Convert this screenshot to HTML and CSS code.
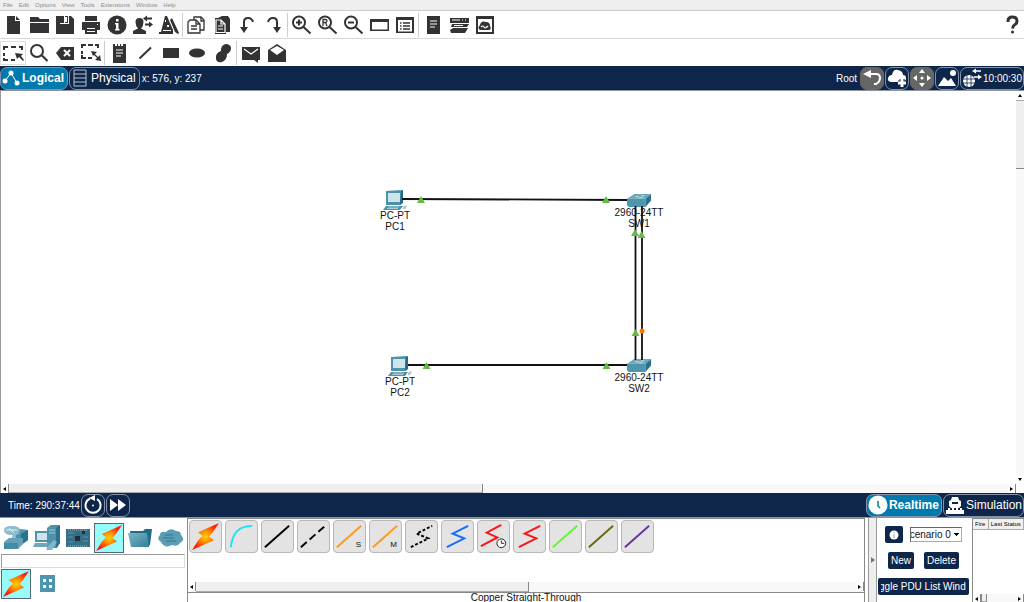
FILE: index.html
```html
<!DOCTYPE html>
<html lang="en">
<head>
<meta charset="utf-8">
<title>Network topology</title>
<link rel="stylesheet" href="styles.css">
</head>
<body>
<svg class="defs" aria-hidden="true">
  <defs>
    <radialGradient id="fire"><stop offset="0" stop-color="#ffd400"/><stop offset=".35" stop-color="#ff9a00"/><stop offset="1" stop-color="#ff1a0a"/></radialGradient>
    <linearGradient id="teal" x1="0" y1="0" x2="1" y2="1"><stop offset="0" stop-color="#7fb5c6"/><stop offset="1" stop-color="#2f7f98"/></linearGradient>
    <symbol id="bolt" viewBox="0 0 28 28"><path d="M27 1 7 10l4 3.500-4 4L1 27l21-9.500-4.500-3.500 3.500-4z" fill="url(#fire)"/></symbol>
    <symbol id="pc" viewBox="0 0 24 20"><path d="M3 1 19 0v13l-2 2H3z" fill="#4b93ab"/><path d="M18 1 20 0v13l-3 2z" fill="#226c86"/><path d="M5 3h12v9H5z" fill="#cfe3ea"/><path d="M3 16h17l-3 4H0z" fill="#4b93ab"/><path d="M5 17h11M4 18.500h11" stroke="#a9cbd7"/><path d="M20 17q3-3 4-1l-2 3q-3 1-2-2z" fill="#a9c8d3"/></symbol>
    <symbol id="switch" viewBox="0 0 26 14"><path d="M0 5 8 0h18l-6 5z" fill="#6ba8bc"/><path d="M0 5h20v9H2L0 12z" fill="#4e96ae"/><path d="M20 5 26 0v7l-6 7z" fill="#2a728c"/><path d="M9 3h4M15 2h4M13 4h4" stroke="#cfe3ea"/></symbol>
  </defs>
</svg>

<nav class="menubar" aria-label="Main menu">
  <a href="#">File</a><a href="#">Edit</a><a href="#">Options</a><a href="#">View</a><a href="#">Tools</a><a href="#">Extensions</a><a href="#">Window</a><a href="#">Help</a>
</nav>

<div class="toolbar main-tools" role="toolbar" aria-label="Main">
  <button class="tool" aria-label="New"><svg viewBox="0 0 24 24"><path d="M6 3h8v5h5v13H6z"/><path d="m15 3 4 4h-4z"/></svg></button>
  <button class="tool" aria-label="Open"><svg viewBox="0 0 24 24"><path d="M3 4h8l2 2h9v3H3zM3 10h19v10H3z"/></svg></button>
  <button class="tool" aria-label="Save"><svg viewBox="0 0 24 24"><path d="M3 3h4v8h9V3h2l3 3v15H3z"/><path d="M12 3h3v7h-3zM7 3h4v7H7z"/><path class="hole" d="M12 4h2v5h-2z"/></svg></button>
  <button class="tool" aria-label="Print"><svg viewBox="0 0 24 24"><path d="M6 3h12v5H6zM3 9h18v8h-3v4H6v-4H3z"/><path class="hole" d="M8 15h8v1H8zM8 18h8v1H8zM18 11h1v1h-1z"/></svg></button>
  <button class="tool" aria-label="Network information"><svg viewBox="0 0 24 24"><circle cx="12" cy="12" r="9.500"/><path class="hole" d="M11 6h2.500v2.500H11zM10 10h3.500v6h1v1.500H10V16h1v-4.500h-1z"/></svg></button>
  <button class="tool" aria-label="User profile"><svg viewBox="0 0 24 24"><path d="M4.500 9q0-4 4-4t4 4-2.500 6.500l5 2.500v3H2v-3l5-2.500Q4.500 13 4.500 9z"/><path class="line" d="M15 5.500h6M14 11.500h6"/><path d="m12 5.500 4-3v6zM22 11.500l-4-3v6z"/></svg></button>
  <button class="tool" aria-label="Wizard"><svg viewBox="0 0 24 24"><path d="M8 3h2l6 14v4H2v-2h2z"/><path d="m13 7 2-2 7 15-1 1-3-2z"/><path class="hole" d="M8 7h1v2H8zM10 12h2v2h-2zM6 17h8v1H6z"/></svg></button>
  <span class="sep"></span>
  <button class="tool" aria-label="Copy"><svg viewBox="0 0 24 24"><g class="outline"><path d="M10 7V4h7l3 3v10h-5"/><path d="M6 7h6l4 4v9H4V9z" fill="#fff"/><path d="M12 7v4h4M7 13h6M7 16h6M17 4v4h3"/></g></svg></button>
  <button class="tool" aria-label="Paste"><svg viewBox="0 0 24 24"><path d="M8 5 12 3h6l2 3v13h-4v2H5V5z"/><path class="holeline" d="M6 7h5l4 4v8.500H6zM11 7v4h4M8 13h5M8 16h5"/></svg></button>
  <button class="tool" aria-label="Undo"><svg viewBox="0 0 24 24"><path class="line" d="M8 16V9q0-4 4-4t5 4"/><path d="M4 14h8l-4 6z"/></svg></button>
  <button class="tool" aria-label="Redo"><svg viewBox="0 0 24 24"><path class="line" d="M6 9q1-4 5-4t4 4v7"/><path d="M11 14h8l-4 6z"/></svg></button>
  <span class="sep"></span>
  <button class="tool" aria-label="Zoom in"><svg viewBox="0 0 24 24"><circle class="line" cx="10" cy="9.500" r="6"/><path class="line" d="m14.500 14 7 6.500M7 9.500h6M10 6.500v6"/></svg></button>
  <button class="tool" aria-label="Zoom reset"><svg viewBox="0 0 24 24"><circle class="line" cx="10" cy="9.500" r="6"/><path class="line" d="m14.500 14 7 6.500"/><path class="outline" d="M8 13V6.500h2.500q1.500 0 1.500 1.500t-1.500 1.500H8m2.500 0L12 13"/></svg></button>
  <button class="tool" aria-label="Zoom out"><svg viewBox="0 0 24 24"><circle class="line" cx="10" cy="9.500" r="6"/><path class="line" d="m14.500 14 7 6.500M7 9.500h6"/></svg></button>
  <button class="tool" aria-label="Draw palette"><svg viewBox="0 0 24 24"><path d="M3 6h19v12H3zM5 9v7.500h15.500V9z" fill-rule="evenodd"/></svg></button>
  <button class="tool" aria-label="Device dialog"><svg viewBox="0 0 24 24"><path d="M3 4h18v16H3zM5 7v11.500h14V7z" fill-rule="evenodd"/><path class="outline" d="M7 10h1.500M10 10h7M7 13h1.500M10 13h7M7 16h1.500M10 16h7" stroke-width="2"/></svg></button>
  <span class="sep"></span>
  <button class="tool" aria-label="Notes"><svg viewBox="0 0 24 24"><path d="M7 3h13v18H7z"/><path class="holeline" d="M10 8h7M10 11h7M10 14h5"/></svg></button>
  <button class="tool" aria-label="Cluster"><svg viewBox="0 0 24 24"><path d="M4 5h19v5H4zM6 11h17l-2 3H5zM7 15h15l-3 5H5l-1-3z"/><path class="holeline" d="M6 7h8M16 7h1M19 7h1M8 12.500h9"/></svg></button>
  <button class="tool" aria-label="Cloud view"><svg viewBox="0 0 24 24"><path d="M4 3h18v18H4zM6 6v13h14V6z" fill-rule="evenodd"/><path d="M8 17q-3-2 0-5 1-5 6-3 4 0 4 4 2 3-1 4z"/><path class="holeline" d="M9 14q2-2 3 0t4-1"/></svg></button>
  <button class="tool help" aria-label="Help"><svg viewBox="0 0 24 24"><path d="M9 9V8q0-4 4.500-4T18 8q0 2.500-2 3.500t-2.500 4" fill="none" stroke="#333335" stroke-width="3"/><circle cx="13.500" cy="19" r="1.500"/></svg></button>
</div>

<div class="toolbar" role="toolbar" aria-label="Common tools">
  <button class="tool selected" aria-label="Select"><svg viewBox="0 0 24 24"><path class="line" d="M3 8V5h4M10 5h5M18 5h3v3M3 11v3M3 16v2h4M10 18h4"/><path d="m14 11 8 1-2 2 3 4-1 1-4-4-2 2z"/></svg></button>
  <button class="tool" aria-label="Inspect"><svg viewBox="0 0 24 24"><circle class="line" cx="10" cy="10" r="6"/><path d="m14 15 2-1 5 5-1 2z"/></svg></button>
  <button class="tool" aria-label="Delete object"><svg viewBox="0 0 24 24"><path d="m3 12 5-6h13v13H8z"/><path d="m11 9 6 6m0-6-6 6" stroke="#fff" stroke-width="2"/></svg></button>
  <button class="tool" aria-label="Resize"><svg viewBox="0 0 24 24"><path class="line" d="M3 7V4h4M9 4h5M16 4h3v3M3 10v3M3 14v3h4M9 17h4"/><path class="outline" d="m14 12 5 5"/><path d="m12 10 6 1-4 4zM22 20l-6-1 5-5z"/></svg></button>
  <span class="sep"></span>
  <button class="tool" aria-label="Place note"><svg viewBox="0 0 24 24"><path d="M6 3h2v2h2V3h1v2h2V3h1v2h2V3h3v19H6z"/><path class="holeline" d="M9 9h7M9 12h7M9 15h5"/></svg></button>
  <button class="tool" aria-label="Draw line"><svg viewBox="0 0 24 24"><path class="line" d="M6.500 17.500 18 6.500"/></svg></button>
  <button class="tool" aria-label="Draw rectangle"><svg viewBox="0 0 24 24"><path d="M4 7h16v10H4z"/></svg></button>
  <button class="tool" aria-label="Draw ellipse"><svg viewBox="0 0 24 24"><ellipse cx="12" cy="12" rx="8" ry="4.500"/></svg></button>
  <button class="tool" aria-label="Draw freeform"><svg viewBox="0 0 24 24"><path d="M10 8q1-5 6-5 4 1 4 4 0 4-4 6 0 6-5 8-5 1-6-3-1-6 5-8z"/></svg></button>
  <span class="sep"></span>
  <button class="tool" aria-label="Add simple PDU"><svg viewBox="0 0 24 24"><path d="M3 6h18v13h-2v3l-4-3H3z"/><path class="holeline" d="m5 8 7 5 7-5"/></svg></button>
  <button class="tool" aria-label="Add complex PDU"><svg viewBox="0 0 24 24"><path d="m3 9 9-6 9 6v12H3z"/><path class="hole" d="m5 9 7-4 7 4-7 5z"/></svg></button>
</div>

<header class="bar">
  <button class="pill strong active"><svg class="i18" viewBox="0 0 18 18"><path d="m3 12 6-8 6 10" fill="none" stroke="#fff"/><circle cx="9" cy="4" r="2.500"/><circle cx="3" cy="12" r="2.500"/><circle cx="15" cy="14" r="2.500"/></svg>Logical</button>
  <button class="pill strong2"><svg class="i18" viewBox="0 0 18 18"><path d="M3 1h12v16H3zM3 5h12M3 9h12M3 13h12" fill="none" stroke="#b9c3d2"/></svg>Physical</button>
  <span class="coords">x: 576, y: 237</span>
  <span class="root">Root</span>
  <button class="pill square grey" aria-label="Back"><svg class="i20" viewBox="0 0 20 20"><path d="M5 6h9q4 0 4 4t-4 6h-2" fill="none" stroke="#fff" stroke-width="2"/><path d="m1 6 8-4v8z"/></svg></button>
  <button class="pill square" aria-label="New cluster"><svg class="i20" viewBox="0 0 20 20"><path d="M4 14q-4-1-3-4t4-3q1-6 6-5t5 5q3 0 3 3t-3 4z"/><path d="M15 11v9M11 15h8" stroke="#0e2649" stroke-width="5"/><path d="M15 11v8M11 15h8" stroke="#fff" stroke-width="3"/></svg></button>
  <button class="pill square grey" aria-label="Move object"><svg class="i20" viewBox="0 0 20 20"><path d="m10 1 3 4H7zM10 19l3-4H7zM1 10l4-3v6zM19 10l-4-3v6z"/><circle cx="10" cy="10" r="1.500"/></svg></button>
  <button class="pill square" aria-label="Background"><svg class="i20" viewBox="0 0 20 20"><path d="m1 18 6-9 4 4 3-3 5 8z"/><circle cx="16" cy="5" r="3"/></svg></button>
  <button class="pill clock"><svg class="i20" viewBox="0 0 20 20"><circle cx="7" cy="13" r="6"/><path d="M1 11h12M1 15h12M5 7v12M9 7v12" fill="none" stroke="#0e2649" stroke-width=".8"/><path d="M13 3h6M12 9h6" stroke="#fff" stroke-width="1.500"/><path d="m10 3 4-2.500v5zM20 9l-4-2.500v5z"/></svg>10:00:30</button>
</header>

<main class="workspace">
  <div class="canvas">
    <figure class="device pc1"><svg class="pcicon"><use href="#pc"/></svg><figcaption>PC-PT<br>PC1</figcaption></figure>
    <figure class="device pc2"><svg class="pcicon"><use href="#pc"/></svg><figcaption>PC-PT<br>PC2</figcaption></figure>
    <figure class="device sw1"><svg class="swicon"><use href="#switch"/></svg><figcaption>2960-24TT<br>SW1</figcaption></figure>
    <figure class="device sw2"><svg class="swicon"><use href="#switch"/></svg><figcaption>2960-24TT<br>SW2</figcaption></figure>
    <svg class="links">
      <path d="M402 108 627 109M408 274H627M635.500 115V269M642 115V269" stroke="#111" stroke-width="1.800"/>
      <g fill="#63bd45"><path d="m421 105 4 7h-8zM606 105l4 7h-8zM635 138l4 7h-8zM641.500 140l4 7h-8zM635.500 238l4 7h-8zM426.500 271l4 7h-8zM606.500 271l4 7h-8z"/></g>
      <circle cx="642" cy="240" r="2.500" fill="#ff7500"/>
    </svg>
  </div>
  <div class="vscroll"><span class="arrow up"></span><span class="vthumb"></span><span class="arrow down"></span></div>
  <div class="hscroll"><span class="arrow left"></span><span class="hthumb"></span><span class="arrow right"></span></div>
</main>

<section class="bar timebar">
  <span class="time">Time: 290:37:44</span>
  <button class="pill square" aria-label="Power cycle devices"><svg class="i20" viewBox="0 0 20 20"><path d="M7 3.500a7.500 7.500 0 1 0 7 .500" fill="none" stroke="#fff" stroke-width="2"/><path d="m6 3 6-3v6z"/><circle cx="10" cy="10.500" r="1"/></svg></button>
  <button class="pill square" aria-label="Fast forward"><svg class="i20" viewBox="0 0 20 20"><path d="m2 4 8 6-8 6zM10 4l8 6-8 6z"/></svg></button>
  <button class="pill strong active realtime"><svg class="i20" viewBox="0 0 20 20"><circle cx="10" cy="10" r="9.500"/><path d="M10 6v5l2 2" fill="none" stroke="#0079ad" stroke-width="1.500"/></svg>Realtime</button>
  <button class="pill strong2 simulation"><svg class="i20" viewBox="0 0 20 20"><path d="M4 11V6l2-1 1-3h6l1 3 2 1v5l-2 2H6z"/><path d="M7 8h6" stroke="#0e2649" stroke-width="2"/><path d="M1 15h2v-2h2v2h2v-2h2v2h2v-2h2v2h2v-2h2v2h2v4H1z"/></svg>Simulation</button>
</section>

<footer class="bottom">
  <div class="picker">
    <div class="cats">
      <button class="cat" aria-label="Network devices"><svg viewBox="0 0 28 28"><path d="m13 9 5-4 8 1v10l-7 5h-5z" fill="#4d93ab"/><path d="m19 10 7-4v10l-7 5z" fill="#2a728c"/><path d="M2 6q0-4 8-4t8 4-4 5l-2 4H8q4-3 2-4-8 0-8-5z" fill="#8cbccb"/><path d="M4 6h11M7 4l5 5" stroke="#e4f0f3"/><path d="m2 18 5-4h14v6l-5 5H2z" fill="#62a1b6"/><path d="M2 19h14v6H2z" fill="#438ca6"/></svg></button>
      <button class="cat" aria-label="End devices"><svg viewBox="0 0 28 28"><path d="m14 4 4-3h9v18l-3 5H14z" fill="#4d93ab"/><path d="m23 4 4-3v18l-4 5z" fill="#2a728c"/><path d="M16 6h6M16 9h6" stroke="#a8cbd6"/><path d="M2 7h14v11H2z" fill="#4d93ab"/><path d="M4 9h10v7H4z" fill="#cfe3ea"/><path d="M2 19h14l-2 4H0z" fill="#6aa7bb"/><path d="m15 22 6-6 3 2-5 8h-6z" fill="#83b7c7"/></svg></button>
      <button class="cat" aria-label="Components"><svg viewBox="0 0 28 28"><path d="M2 5h24v18H2z" fill="#346f86"/><path d="M4 6h20M4 22h20" stroke="#9ac0cb" stroke-dasharray="1 1"/><path d="M11 12h5v5h-5zM18 7h3v3h-3z" fill="#1c2f3b"/><path d="M4 9h6M4 13h5M19 13h5M18 17h6M4 18h5" stroke="#5b94a8"/></svg></button>
      <button class="cat on" aria-label="Connections"><svg><use href="#bolt"/></svg></button>
      <button class="cat" aria-label="Miscellaneous"><svg viewBox="0 0 28 28"><path d="M4 7h13l2-2h7l-2 16-4 2H6z" fill="#1f6c86"/><path d="M2 9h19l2 14H5z" fill="url(#teal)"/></svg></button>
      <button class="cat" aria-label="Multiuser connection"><svg viewBox="0 0 28 28"><path d="M4 18q-5-3-1-7 0-4 6-3 4-5 10-1 5 0 5 4 5 5-1 8-2 4-8 2-7 4-11-3z" fill="#5a9db4"/><path d="M8 11h8M6 14h11M9 17h10" stroke="#2d7893"/></svg></button>
    </div>
    <input class="search" type="text" aria-label="Device search">
    <div class="cats">
      <button class="cat on" aria-label="Cables"><svg><use href="#bolt"/></svg></button>
      <button class="cat" aria-label="Structured cabling"><svg viewBox="0 0 28 28"><path d="M7 5h15v17H7z" fill="#4d94ae"/><path d="M10 9h3v3h-3zM16 9h3v3h-3zM10 15h3v3h-3zM16 15h3v3h-3z" fill="#fff"/></svg></button>
    </div>
  </div>

  <div class="cables">
    <div class="cablelist">
      <button class="cable" aria-label="Automatic"><svg viewBox="0 0 32 32"><use href="#bolt" x="1" y="1" width="30" height="30"/></svg></button>
      <button class="cable" aria-label="Console"><svg viewBox="0 0 32 32"><path d="M5 27Q7 5 27 5" stroke="#19e3f5"/></svg></button>
      <button class="cable" aria-label="Copper Straight-Through"><svg viewBox="0 0 32 32"><path d="M3 27 28 5" stroke="#000"/></svg></button>
      <button class="cable" aria-label="Copper Cross-Over"><svg viewBox="0 0 32 32"><path d="M3 27 28 5" stroke="#000" stroke-dasharray="8 4"/></svg></button>
      <button class="cable"><svg viewBox="0 0 32 32"><path d="M3 27 28 5" stroke="#ff9a1a"/></svg><span>S</span></button>
      <button class="cable"><svg viewBox="0 0 32 32"><path d="M3 27 28 5" stroke="#ff9a1a"/></svg><span>M</span></button>
      <button class="cable" aria-label="Phone"><svg viewBox="0 0 32 32"><path d="M5 27 23 18 11 13 27 5" stroke="#000" stroke-dasharray="3 2"/></svg></button>
      <button class="cable" aria-label="Coaxial"><svg viewBox="0 0 32 32"><path d="M5 27 23 18 11 13 27 5" stroke="#126cff"/></svg></button>
      <button class="cable" aria-label="Serial DCE"><svg viewBox="0 0 32 32"><path d="M3 26 20 17 9 12 24 4" stroke="#f91515"/><circle cx="24" cy="23" r="4.500" fill="#fff" stroke="#222" stroke-width="1"/><path d="M24 20v3h3" stroke="#222" stroke-width="1"/></svg></button>
      <button class="cable" aria-label="Serial DTE"><svg viewBox="0 0 32 32"><path d="M5 27 23 18 11 13 27 5" stroke="#f91515"/></svg></button>
      <button class="cable" aria-label="Octal"><svg viewBox="0 0 32 32"><path d="M3 27 28 5" stroke="#66f52e"/></svg></button>
      <button class="cable" aria-label="IoT custom cable"><svg viewBox="0 0 32 32"><path d="M3 27 28 5" stroke="#6b660e"/></svg></button>
      <button class="cable" aria-label="USB"><svg viewBox="0 0 32 32"><path d="M3 27 28 5" stroke="#66359c"/></svg></button>
    </div>
    <div class="hscroll"><span class="arrow left"></span><span class="hthumb"></span><span class="arrow right"></span></div>
    <div class="cablename">Copper Straight-Through</div>
  </div>

  <div class="splitter"></div>

  <div class="pdu">
    <div class="pdurow">
      <button class="btn info" aria-label="Scenario details"><svg viewBox="0 0 10 10"><circle cx="5" cy="5" r="4.500" fill="#fff"/><path d="M5 2v1M5 4v4" stroke="#8ca0b8"/></svg></button>
      <select class="scenario" aria-label="Scenario"><option>Scenario 0</option></select>
    </div>
    <div class="pdurow wide"><button class="btn">New</button><button class="btn">Delete</button></div>
    <button class="btn toggle"><span>Toggle PDU List Window</span></button>
  </div>

  <div class="pdulist">
    <table><thead><tr><th>Fire</th><th>Last Status</th></tr></thead></table>
    <div class="hscroll"><span class="arrow left"></span><span class="hthumb"></span><span class="arrow right"></span></div>
  </div>
</footer>
</body>
</html>
```
FILE: styles.css
```css
* { box-sizing: border-box; }
body {
  margin: 0;
  height: 100vh;
  display: flex;
  flex-direction: column;
  overflow: hidden;
  background: #fff;
  color: #111;
  font: 10px/11px "Liberation Sans", Arial, sans-serif;
}
button, input, select { font: inherit; color: inherit; margin: 0; padding: 0; border: 0; background: none; }
svg { display: block; flex: none; }
.defs { position: absolute; width: 0; height: 0; }

.menubar {
  display: flex;
  gap: 6px;
  padding: 0 3px;
  background: #efefef;
  border-bottom: 1px solid #ccc;
  font-size: 6px;
  line-height: 10px;
}
.menubar a { color: #8c8c8c; text-decoration: none; }

.toolbar { display: flex; align-items: center; height: 27px; }
.main-tools { height: 28px; border-bottom: 1px solid #d8d8d8; }
.tool { width: 26px; height: 24px; display: grid; place-items: center; flex: none; }
.tool svg { width: 24px; height: 24px; fill: #333335; }
.tool.selected { border: 1px solid #ddd; }
.tool .line { fill: none; stroke: #333335; stroke-width: 2; }
.tool .outline { stroke: #333335; stroke-width: 1.3; fill: none; }
.tool .hole { fill: #fff; }
.tool .holeline { fill: none; stroke: #fff; stroke-width: 1.2; }
.sep { width: 1px; height: 24px; background: #ccc; }
.toolbar:not(.main-tools) .sep { margin-right: 1px; }
.help { margin-left: auto; }

.bar {
  display: flex;
  align-items: center;
  gap: 1px;
  height: 25px;
  background: #0e2649;
  border-bottom: 1px solid #8a94a3;
  color: #fff;
}
.pill {
  display: flex;
  align-items: center;
  justify-content: center;
  gap: 2px;
  height: 23px;
  padding: 0 3px 0 1px;
  border: 1px solid #8292aa;
  border-radius: 7px;
  white-space: nowrap;
}
.pill svg { fill: #fff; }
.i18 { width: 18px; height: 18px; }
.i20 { width: 20px; height: 20px; }
.strong, .strong2 { font-size: 12px; }
.strong { font-weight: bold; }
.active { background: #0079ad; }
.square { width: 24px; padding: 0; }
.square.grey { background: #666; border-color: #666; }
.coords { padding-left: 1px; }
.root { margin-left: auto; padding-right: 2px; }
.clock { padding: 0 1px; gap: 1px; }
.time { padding-left: 8px; }
.realtime { margin-left: auto; gap: 1px; padding-right: 2px; }
.simulation { gap: 1px; padding-right: 1px; }

.workspace {
  flex: 1;
  min-height: 0;
  display: grid;
  grid-template: 1fr 9px / 1fr 8px;
  border-left: 1px solid #999;
}
.canvas { position: relative; overflow: hidden; margin-left: -1px; }
.device { position: absolute; width: 60px; margin: 0; text-align: center; }
.device svg { margin: 0 auto; }
.pcicon { width: 24px; height: 20px; }
.swicon { width: 26px; height: 13px; }
.pc1 { left: 365px; top: 99px; }
.pc2 { left: 370px; top: 265px; }
.sw1 { left: 609px; top: 103px; }
.sw2 { left: 609px; top: 268px; }
.links { position: absolute; inset: 0; width: 100%; height: 100%; }

.vscroll { display: flex; flex-direction: column; background: #f8f8f8; }
.vthumb { height: 69px; background: #efefef; border-bottom: 1px solid #888; border-top: 1px solid #aaa; }
.hscroll { display: flex; height: 9px; background: #f8f8f8; }
.hthumb { width: 474px; background: #efefef; border-right: 1px solid #888; border-bottom: 1px solid #aaa; }
.arrow { width: 8px; height: 9px; display: grid; place-items: center; background: #fff; flex: none; }
.arrow::before { content: ""; border: 2px solid transparent; }
.left { border-right: 1px solid #888; }
.left::before { border-right: 3px solid #000; border-left: 0; }
.right { margin-left: auto; border-right: 1px solid #888; }
.right::before { border-left: 3px solid #000; border-right: 0; }
.up::before { border-bottom: 3px solid #000; border-top: 0; }
.down { margin-top: auto; }
.down::before { border-top: 3px solid #000; border-bottom: 0; }

.bottom { display: grid; grid-template-columns: 187px 1fr 9px 95px 52px; }
.picker { padding: 5px 2px 3px 1px; }
.cats { display: flex; gap: 1px; }
.cat { width: 30px; height: 30px; display: grid; place-items: center; flex: none; }
.cat svg { width: 28px; height: 28px; }
.cat.on { background: #98fbfb; border: 1px solid #567; }
.search { display: block; width: 100%; height: 14px; margin: 1px 0; border: 1px solid #999; border-right-color: #ddd; border-bottom-color: #ddd; }

.cables { display: flex; flex-direction: column; margin-right: 3px; border: 1px solid #888; border-bottom: 0; min-width: 0; }
.cablelist { display: flex; gap: 3px; padding: 1px; flex: 1; }
.cable { display: grid; width: 33px; height: 33px; background: #e3e3e3; border: 1px solid #b8b8b8; border-radius: 4px; flex: none; }
.cable svg { grid-area: 1 / 1; width: 31px; height: 31px; fill: none; stroke-width: 2; }
.cable span { grid-area: 1 / 1; align-self: end; justify-self: end; padding: 0 4px 2px 0; font-size: 8px; }
.cables .hscroll { height: 11px; border-bottom: 1px solid #888; }
.cables .hthumb { width: 333px; }
.cablename { height: 9px; line-height: 10px; overflow: hidden; text-align: center; }

.splitter { display: grid; place-items: center; background: #eee; border-left: 1px solid #999; border-right: 1px solid #999; }
.splitter::before { content: ""; border: 3px solid transparent; border-left: 4px solid #777; border-right: 0; }

.pdu { display: flex; flex-direction: column; gap: 9px; padding: 8px 3px 0 1px; }
.pdurow { display: flex; justify-content: center; align-items: center; gap: 7px; height: 17px; }
.pdurow.wide { gap: 10px; }
.btn { height: 17px; padding: 0 3px; background: #0e2649; color: #fff; border-radius: 2px; }
.info { width: 18px; display: grid; place-items: center; }
.info svg { width: 10px; height: 10px; }
.scenario {
  width: 52px;
  height: 15px;
  appearance: none;
  border: 1px solid #aaa;
  border-top-color: #666;
  border-left-color: #666;
  border-radius: 0;
  text-indent: -8px;
  background: linear-gradient(#000, #000) right 2px top 5px / 5px 1px no-repeat, linear-gradient(#000, #000) right 3px top 6px / 3px 1px no-repeat, linear-gradient(#000, #000) right 4px top 7px / 1px 1px no-repeat, #fff;
}
.toggle span { display: flex; justify-content: center; overflow: hidden; white-space: nowrap; }

.pdulist { display: flex; flex-direction: column; justify-content: space-between; border-left: 1px solid #888; border-top: 1px solid #888; min-width: 0; overflow: hidden; }
.pdulist table { border-collapse: collapse; font-size: 6px; line-height: 10px; }
.pdulist th { padding: 0 2px; background: #f0f0f0; border: 1px solid #aaa; border-width: 0 1px 1px 0; color: #000; font-weight: normal; white-space: nowrap; }
.pdulist .hscroll { height: 8px; }
.pdulist .hthumb { width: 6px; border-left: 1px solid #888; }
```
